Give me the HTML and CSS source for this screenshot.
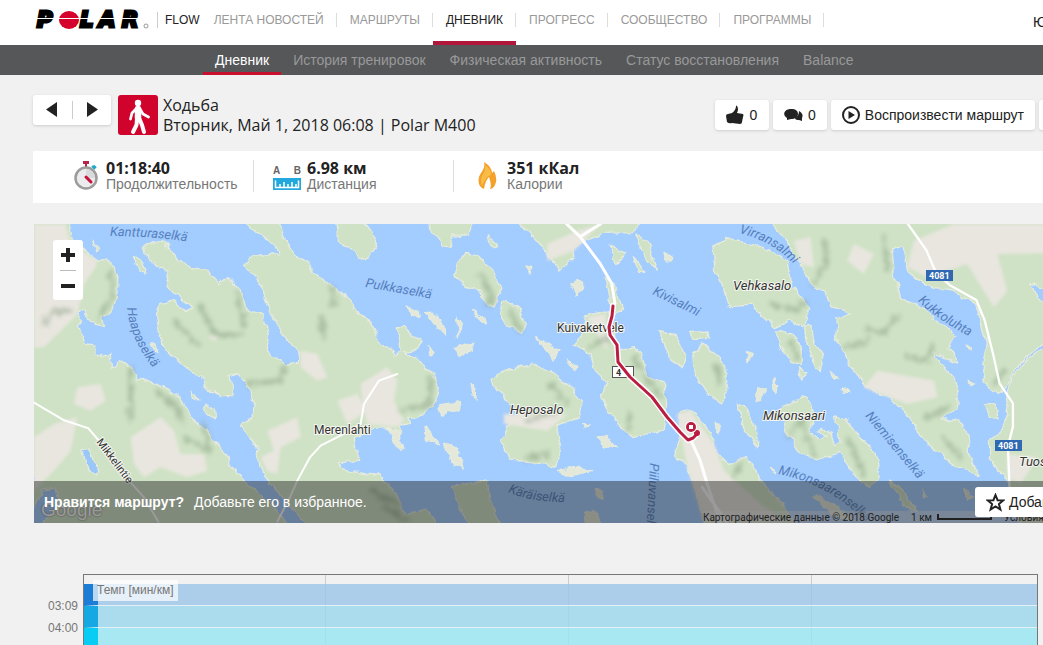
FILE: index.html
```html
<!DOCTYPE html>
<html lang="ru">
<head>
    <meta charset="UTF-8">
    <meta name="viewport" content="width=device-width, initial-scale=1.0">
    <title>Polar Flow - Дневник</title>
    <link rel="stylesheet" href="styles.css">
</head>
<body>
<div class="page">

    <header class="topbar">
        <a href="#" class="logo" aria-label="Polar">
            <svg width="116" height="24" viewBox="0 0 116 24">
                <g class="logo-text">
                    <text x="4" y="19">P</text>
                    <text x="47" y="19">L</text>
                    <text x="66" y="19">A</text>
                    <text x="89" y="19">R</text>
                </g>
                <ellipse cx="36" cy="12" rx="10" ry="9" fill="#d5002b"/>
                <path d="M0 10.500H112" stroke="#fff" stroke-width="1"/>
                <circle cx="113" cy="18" r="2" fill="none" stroke="#999"/>
            </svg>
        </a>
        <a href="#" class="flow">FLOW</a>
        <nav class="main-nav">
            <a href="#">ЛЕНТА НОВОСТЕЙ</a>
            <a href="#">МАРШРУТЫ</a>
            <a href="#" class="active">ДНЕВНИК</a>
            <a href="#">ПРОГРЕСС</a>
            <a href="#">СООБЩЕСТВО</a>
            <a href="#">ПРОГРАММЫ</a>
        </nav>
        <a href="#" class="user">Юрий</a>
    </header>

    <nav class="sub-nav">
        <a href="#" class="active">Дневник</a>
        <a href="#">История тренировок</a>
        <a href="#">Физическая активность</a>
        <a href="#">Статус восстановления</a>
        <a href="#">Balance</a>
    </nav>

    <main>
        <div class="session">
            <div class="pager">
                <button aria-label="Назад"><svg width="12" height="16" viewBox="0 0 12 16"><path d="M11 0V15L0 7.500Z" fill="#222"/></svg></button>
                <button aria-label="Вперёд"><svg width="12" height="16" viewBox="0 0 12 16"><path d="M1 0V15L12 7.500Z" fill="#222"/></svg></button>
            </div>
            <div class="sport">
                <svg width="40" height="40" viewBox="0 0 40 40">
                    <circle cx="20" cy="8" r="3.200" fill="#fff"/>
                    <g fill="none" stroke="#fff" stroke-linecap="round" stroke-linejoin="round">
                        <path d="M20 14V23" stroke-width="6.500"/>
                        <path d="M18 14L14 18L12.500 24M22 14L25 19L30.500 22" stroke-width="2.800"/>
                        <path d="M19 24L18.500 30L15 37M21.500 24L24 30L26 37" stroke-width="4"/>
                    </g>
                </svg>
            </div>
            <h1>Ходьба<br>Вторник, Май 1, 2018 06:08 | Polar M400</h1>
            <div class="actions">
                <button class="count">
                    <svg width="18" height="20" viewBox="0 0 18 20"><path d="M0 11Q0 9 2 9L6 8Q10 5 10 1Q10 0 11 1Q13 4 11 8L17 9Q18 10 17 12L16 17Q16 19 14 19L6 18Q3 19 1 17Z" fill="#222"/></svg>0
                </button>
                <button class="count">
                    <svg width="19" height="14" viewBox="0 0 19 14"><path d="M15 3Q20 6 18 10L18 13L15 12Q11 12 11 10Q15 8 15 3Z" fill="#222"/><path d="M7 1C12 1 14 3 14 6C14 9 11 11 7 11L3 12L3 10C-2 7 0 1 7 1Z" fill="#222"/></svg>0
                </button>
                <button>
                    <svg width="18" height="18" viewBox="0 0 18 18"><circle cx="9" cy="9" r="8" fill="none" stroke="#222" stroke-width="2"/><path d="M6.500 5V13L13 9Z" fill="#222"/></svg>Воспроизвести маршрут
                </button>
                <button class="export">Экспорт</button>
            </div>
        </div>

        <section class="stats">
            <div class="stat">
                <svg width="26" height="30" viewBox="0 0 26 30">
                    <path d="M9 0H15V3H9ZM11 3H13V6H11Z" fill="#b5254a"/>
                    <path d="M18 5L21 8M19.500 4.500L22 7" stroke="#22a7c4" stroke-width="2"/>
                    <circle cx="12" cy="17" r="10.500" fill="#ececee" stroke="#9c9c9c" stroke-width="2.500"/>
                    <path d="M12 17V8A9 9 0 0 1 21 17Z" fill="#d9dadb"/>
                    <path d="M12 16L17 21" stroke="#c5133c" stroke-width="3" stroke-linecap="round"/>
                </svg>
                <p><strong>01:18:40</strong><span>Продолжительность</span></p>
            </div>
            <div class="stat">
                <div class="ruler">
                    <b>A</b><b>B</b>
                    <svg width="28" height="12" viewBox="0 0 28 12"><rect width="28" height="12" fill="#23a8dd"/><path d="M2.500 2.500V9.500H25.500V2.500M7 9V6M11 9V4M15 9V6M19 9V4M23 9V6" fill="none" stroke="#fff" stroke-width="1.500"/></svg>
                </div>
                <p><strong>6.98 км</strong><span>Дистанция</span></p>
            </div>
            <div class="stat">
                <svg width="19" height="28" viewBox="0 0 19 28">
                    <path d="M6 0Q14 5 14 11L16 9Q20 17 17 23Q15 27 12 27Q14 23 11 15Q7 19 6 27Q-1 24 1 15Q2 12 5 8Q7 4 6 0Z" fill="#f4a12c"/>
                    <path d="M7 3Q13 7 13 13Q8 14 4 24Q2 19 4 14Q8 9 7 3Z" fill="#f9bd45"/>
                </svg>
                <p><strong>351 кКал</strong><span>Калории</span></p>
            </div>
        </section>

        <section class="map">
            <svg class="terrain" viewBox="0 0 1186 299" preserveAspectRatio="xMinYMin slice">
                <defs>
                    <filter id="coast" x="0" y="0" width="100%" height="100%">
                        <feTurbulence type="fractalNoise" baseFrequency="0.090" numOctaves="3" seed="4"/>
                        <feDisplacementMap in="SourceGraphic" scale="8" xChannelSelector="R" yChannelSelector="G"/>
                    </filter>
                    <filter id="soft" x="-20%" y="-20%" width="140%" height="140%"><feGaussianBlur stdDeviation="4"/></filter>
                    <filter id="shade" x="-20%" y="-20%" width="140%" height="140%">
                        <feTurbulence type="fractalNoise" baseFrequency="0.060" numOctaves="3" seed="9" result="noise"/>
                        <feDisplacementMap in="SourceGraphic" in2="noise" scale="36" xChannelSelector="R" yChannelSelector="G"/>
                        <feGaussianBlur stdDeviation="7"/>
                    </filter>
                    <path id="p-haapa" d="M93 84Q97 118 121 146"/>
                    <path id="p-kantt" d="M76 12Q115 12 158 18"/>
                    <path id="p-virra" d="M705 9Q742 18 765 46"/>
                    <path id="p-mikon" d="M744 250Q795 260 832 298"/>
                    <path id="p-karai" d="M474 268Q497 279 540 278"/>
                    <path id="p-kukko" d="M884 77Q905 98 945 117"/>
                </defs>
                <rect width="1186" height="299" fill="#a3ccff"/>

                <g filter="url(#coast)">
                <g transform="scale(.3333)" fill="#cfe2c5" stroke="#e6ebdc" stroke-width="4" stroke-linejoin="round">
                    <!-- west shore and the central peninsula -->
                    <g transform="translate(-12 -12)">
                        <path d="M-20 -20H115L130 55L165 95L200 120L245 125L260 180L262 230L245 275L215 290L220 320L195 312L160 275L145 275L150 320L165 370L190 375L205 410L240 400L245 445L270 425L300 440L325 485L350 475L400 500L440 520L470 565L500 610L540 645L580 690L600 735L640 780L690 820L740 870L780 930H-20Z"/>
                        <path d="M630 -10L690 45L735 75L745 105L670 105L640 135L680 170L700 220L720 270L745 320L780 370L808 400L805 430L770 435L730 410L712 390L715 340L700 290L650 260L630 215L610 180L590 170L565 195L540 160L515 150L480 140L445 125L430 100L405 70L370 65L340 80L345 100L370 130L410 150L415 200L450 230L485 265L470 275L430 245L395 250L380 280L385 320L395 370L420 405L470 435L480 460L515 470L520 500L570 530L610 530L600 470L620 458L640 480L665 510L675 560L665 590L630 615L660 650L685 690L680 710L690 730L705 770L740 810L790 870L850 930H1235L1190 870L1130 880L1100 830L1060 780L1050 765L930 745L925 735L985 720L990 695L975 690L970 650L1035 628L1080 625L1100 670L1115 690L1110 615L1140 610L1130 590L1180 585L1210 560L1225 510L1210 465L1160 420L1120 395L1150 390L1180 362L1145 350L1130 320L1102 320L1110 390L1090 405L1050 360L1020 310L990 290L950 230L890 190L850 150L800 110L760 50L740 -10Z"/>
                        <path d="M310 110L330 115L350 160L325 155ZM485 515L510 540L490 535ZM525 555L555 570L555 597L530 580ZM190 60L208 90L200 95ZM355 370L375 375L385 395Z"/>
                        <path d="M915 -10L925 60L960 95L1010 118L1040 80L1030 50L990 -10Z"/>
                        <path d="M150 685L175 690L205 740L200 765L180 755Z" fill="#9bc7f8"/>
                        <path d="M35 810L75 805L90 850L60 880L30 930H0V880ZM-10 750L25 775L10 790Z" fill="#a3ccff"/>
                    </g>
                    <!-- islands in the middle -->
                    <g transform="translate(1008 -12)">
                        <path d="M170 -10H315L300 45L250 45L240 85L220 80L190 40ZM355 45L385 70L380 82L355 65ZM265 130L290 100L325 105L365 145L385 190L395 220L375 258L350 250L325 210L290 200L255 170ZM395 245L440 255L470 310L455 340L410 315L392 285Z"/>
                        <path d="M425 -10L490 50L520 85L570 150L612 115L605 85L650 60L700 40L790 38L820 -10ZM795 45L830 60L862 150L830 120ZM720 75L750 90L770 100L740 130ZM790 110L825 155L805 150Z"/>
                        <path d="M365 480L400 455L480 432L560 465L600 500L640 545L630 590L560 615L575 700L560 740L480 725L420 720L395 660L430 590L450 590L400 530Z"/>
                        <path d="M650 285L710 275L730 330L740 400L790 380L815 405L830 470L880 490L890 550L880 630L840 640L790 650L730 600L710 560L695 530L710 490L670 440L660 405L610 370L640 340ZM700 170L735 200L755 270L735 290L715 220Z"/>
                        <path d="M930 580L965 570L1035 660L1039 700L1079 730L1129 710L1154 750L1199 810L1249 870L1280 930H1010L970 790L950 735L920 720L915 690L930 660Z"/>
                        <path d="M245 800L350 780L360 840L395 930H310L265 850ZM870 335L920 345L945 400L935 440L900 415ZM970 400L1000 370L1040 400L1064 440L1069 500L1059 550L1019 530L980 470ZM960 335L1010 330L1015 355L970 360Z"/>
                        <g fill="#e3e8d8">
                            <path d="M115 260L140 270L145 290L122 290ZM170 280L200 280L230 345L205 330ZM260 290L272 310L265 350ZM308 275L352 300L345 312ZM255 385L305 370L308 390L265 403ZM180 380L195 400L183 405ZM500 352L570 395L550 420ZM595 415L625 440L612 450ZM600 195L625 180L643 200L620 225ZM468 140L485 145L482 162ZM885 100L905 115L890 120Z"/>
                            <path d="M300 490L325 540L305 520ZM205 555L275 545L265 570L215 582ZM55 620L85 630L98 690L75 665ZM165 620L205 675L170 660ZM218 670L245 665L283 750L255 735ZM680 655L710 645L745 685L700 680ZM560 755L610 740L665 752L590 765ZM635 610L660 618L640 626ZM670 815L700 810L695 840ZM640 880L680 870L700 930H645Z"/>
                        </g>
                    </g>
                    <!-- east shore -->
                    <g transform="translate(2007 -12)">
                        <path d="M185 -10L240 50L270 90L290 130L330 200L370 215L380 255L445 280L400 300L395 360L430 400L445 440L490 500L560 530L610 580L640 620L660 660L710 700L760 740L825 765L800 700L795 640L770 600L715 600L760 560L770 500L740 460L690 400L770 430L735 380L755 350L700 300L640 255L595 235L575 170L568 90L600 80L620 160L680 200L750 210L820 255L835 310L850 370L840 440L850 500L890 520L920 480L950 430L1020 370L1600 340V-10Z"/>
                        <path d="M1600 365L1020 385L960 430L925 480L905 520L920 600L890 640L860 670L860 720L900 765L920 800L960 930H1600Z"/>
                        <path d="M30 80L70 55L130 65L200 90L250 120L270 200L315 260L300 320L260 300L215 320L170 280L150 255L80 260L60 200L35 140Z"/>
                        <path d="M225 570L300 530L325 560L330 600L322 640L350 660L372 650L345 635L350 620L385 640L395 680L415 670L395 590L430 600L480 660L520 700L530 780L500 805L460 770L410 700L350 720L290 700L260 650Z"/>
                        <path d="M215 330L250 330L295 380L295 430L265 425L235 380ZM305 320L330 320L335 365L360 410L352 455L335 430L310 370ZM290 440L312 465L295 480ZM100 550L130 560L165 640L160 680L125 630ZM845 550L880 560L885 600L860 590ZM560 780L600 810L640 880L600 850Z"/>
                        <path d="M165 500L190 510L180 540L160 545ZM210 475L228 495L215 520ZM130 395L150 400L135 425ZM385 455L410 475L395 480ZM420 500L438 520L425 520ZM790 375L808 385L795 395ZM795 475L818 495L805 500ZM330 825L400 860L450 900L380 880ZM660 810L675 825L665 828ZM785 805L810 830L795 838ZM40 610L55 620L45 640ZM200 740L220 765L205 755Z" fill="#e3e8d8"/>
                        <path d="M980 185L1040 215V260L1005 235Z" fill="#a3ccff"/>
                    </g>
                </g>
                </g>

                <g transform="scale(.3333)">
                    <!-- open fields -->
                    <g fill="#e8e6df" filter="url(#soft)">
                        <path d="M0 0H95L110 60L190 110L185 130L150 180L130 270L70 330L30 370H0ZM130 490L200 480L215 530L170 560L120 540ZM60 600L130 580L110 680L60 740L0 800V640ZM290 640L380 580L420 620L440 690L510 690L520 740L460 760L380 730L330 760L300 720ZM700 620L790 580L800 640L720 680ZM680 700L740 670L730 750L700 740ZM800 380L850 390L880 460L850 470L800 430ZM910 530L970 510L1000 560L940 600ZM530 330L550 335L545 350L525 345Z"/>
                        <path d="M980 480L1060 430L1090 470L1080 530L1110 590L1090 610L1000 600L990 560ZM1540 60L1630 20L1700 0L1620 80L1540 110ZM1410 570L1600 570L1540 620L1410 600ZM1660 280L1715 270L1720 380ZM1930 570L1970 560L2040 660L2070 740L2180 840L2250 890H2010L1960 730Z"/>
                        <path d="M2280 50L2330 40L2340 130L2300 120ZM2460 60L2520 90L2490 150L2440 110ZM2640 50L2760 0H3560V80L2890 90L2920 200L2880 250L2800 120L2680 160L2620 130ZM2530 440L2700 470L2710 520L2620 540L2490 490ZM2920 690L3010 700L2960 780L2920 760Z"/>
                    </g>
                    <!-- hill shading -->
                    <g fill="none" stroke="#7f967a" stroke-width="14" stroke-linecap="round" opacity=".45" filter="url(#shade)">
                        <path d="M232 140L236 215L195 280M290 430L290 590M365 500L430 550L445 590M510 600L525 680L450 640M500 250L540 330L620 330M640 480L740 470L750 430M890 190L905 240L890 240M860 280L870 340M30 300L60 260L110 260M610 210L630 300M420 290L490 360"/>
                        <path d="M1190 460L1190 540L1100 560M1340 150L1380 230L1360 240M1430 260L1460 320M1790 560L1780 620M1800 400L1830 450L1880 520M1670 370L1720 340M1480 590L1560 560M1550 480L1600 540M1480 700L1540 690M1050 850L1120 890M1010 800L1090 840"/>
                        <path d="M2210 240L2290 260L2310 230M2370 50L2380 110L2340 180M2550 30L2560 130M2500 310L2540 330L2590 280M2620 400L2680 410L2700 360M2440 370L2500 350M2260 640L2300 590L2340 690M2440 640L2490 750M2910 440L2880 480M2050 420L2055 480M2270 350L2290 400M2680 580L2740 550M2730 640L2780 700M2100 760L2120 720"/>
                    </g>
                    <g fill="none" stroke="#fff" stroke-linecap="round" stroke-linejoin="round">
                        <path d="M0 536L88 588L163 613L193 648L288 773L328 818L373 893M730 893L768 820L790 770L828 700L860 665L930 630L980 600L990 540L1035 470L1090 450" stroke-width="6"/>
                        <path d="M1598 0L1638 38L1698 118L1733 178L1743 238M1638 38L1700 0M1973 653L1998 708L2020 780L2060 900M2005 790L2080 897" stroke-width="9"/>
                        <path d="M2622 0L2677 78L2707 148L2747 183L2827 228L2852 288L2877 388L2897 478L2937 538L2937 608L2922 668L2927 790" stroke-width="7"/>
                    </g>
                </g>

                <g class="water-label">
                    <text><textPath href="#p-kantt">Kantturaselkä</textPath></text>
                    <text><textPath href="#p-haapa">Haapaselkä</textPath></text>
                    <text transform="translate(331 63) rotate(10)">Pulkkaselkä</text>
                    <text transform="translate(618 70) rotate(26)">Kivisalmi</text>
                    <text><textPath href="#p-virra">Virransalmi</textPath></text>
                    <text><textPath href="#p-kukko">Kukkoluhta</textPath></text>
                    <text transform="translate(831 192) rotate(50)">Niemisenselkä</text>
                    <text><textPath href="#p-mikon">Mikonsaarenselkä</textPath></text>
                    <text><textPath href="#p-karai">Käräiselkä</textPath></text>
                    <text transform="translate(616 239) rotate(93)">Piiluvanselkä</text>
                </g>
                <g class="place-label">
                    <text x="523" y="108">Kuivaketvele</text>
                    <text x="280" y="210">Merenlahti</text>
                    <text x="476" y="190" class="island">Heposalo</text>
                    <text x="699" y="66" class="island">Vehkasalo</text>
                    <text x="729" y="196" class="island">Mikonsaari</text>
                    <text x="985" y="242" class="island">Tuosa</text>
                    <text transform="translate(62 218) rotate(53)" class="road">Mikkelintie</text>
                </g>
                <g class="shield">
                    <rect x="578.500" y="142.500" width="21" height="11" fill="#fff" stroke="#555"/>
                    <text x="582" y="152" fill="#333">4</text>
                    <rect x="892" y="46" width="27" height="11" fill="#2f69b3"/>
                    <text x="895" y="55">4081</text>
                    <rect x="961" y="216" width="27" height="11" fill="#2f69b3"/>
                    <text x="964" y="225">4081</text>
                </g>
                <!-- walked route -->
                <g fill="none" stroke-linecap="round" stroke-linejoin="round">
                    <path d="M579 82L578 92L575 103L576 111L583 121L584 138L596 153L618 173L633 193L646 208L654 216L659 214L664 209" stroke="#fff" stroke-width="6"/>
                    <path d="M579 82L578 92L575 103L576 111L583 121L584 138L596 153L618 173L633 193L646 208L654 216L659 214L664 209" stroke="#ba1d41" stroke-width="3"/>
                </g>
                <circle cx="663" cy="209" r="3" fill="#ba1d41"/>
                <circle cx="657" cy="203" r="6" fill="#fff"/>
                <circle cx="657" cy="203" r="5" fill="#ba1d41"/>
                <rect x="655" y="201" width="4" height="4" fill="#fff"/>
            </svg>

            <div class="zoom">
                <button aria-label="Приблизить"><svg width="14" height="14" viewBox="0 0 14 14"><path d="M7 0V14M0 7H14" stroke="#222" stroke-width="4"/></svg></button>
                <button aria-label="Отдалить"><svg width="14" height="14" viewBox="0 0 14 14"><path d="M0 7H14" stroke="#222" stroke-width="4"/></svg></button>
            </div>

            <div class="credits">
                <span>Картографические данные © 2018 Google</span>
                <span class="scale">1 км <i></i></span>
                <a href="#">Условия</a>
            </div>
            <span class="google">Google</span>

            <div class="favorite">
                <p><strong>Нравится маршрут?</strong>Добавьте его в избранное.</p>
                <button>
                    <svg width="19" height="19" viewBox="0 0 19 19"><path d="M9.500 2L11.600 7.200L17.200 7.500L12.900 11L14.400 16.500L9.500 13.400L4.600 16.500L6.100 11L1.800 7.500L7.400 7.200Z" fill="none" stroke="#222" stroke-width="2"/></svg>Добавить в избранное
                </button>
            </div>
        </section>

        <section class="chart">
            <div class="axis"><span>03:09</span><span>04:00</span></div>
            <div class="plot">
                <span class="legend">Темп [мин/км]</span>
                <div class="zone zone-5"></div>
                <div class="zone zone-4"></div>
                <div class="zone zone-3"></div>
            </div>
        </section>
    </main>

</div>
</body>
</html>
```
FILE: styles.css
```css
* { box-sizing: border-box; }
body { margin: 0; overflow-x: hidden; background: #f1f1f1; color: #222; font: 14px/18px "Liberation Sans", Arial, sans-serif; }
a { color: inherit; text-decoration: none; }
p, h1 { margin: 0; }
button { display: flex; align-items: center; justify-content: center; padding: 0; border: none; background: #fff; color: #222; font: inherit; white-space: nowrap; cursor: pointer; }
svg { display: block; flex: none; }
.page { min-width: 1220px; overflow: hidden; }

/* header */
.topbar { display: flex; height: 45px; padding-left: 33px; background: #fff; font-size: 12px; line-height: 40px; }
.logo { padding-top: 8px; }
.logo-text { font: italic bold 21px "DejaVu Sans", sans-serif; stroke: #000; stroke-width: 3px; }
.flow { height: 16px; margin: 12px 1px 0 8px; padding-left: 7px; border-left: 1px solid #ccc; line-height: 17px; }
.main-nav { display: flex; color: #999; }
.main-nav a { position: relative; padding: 0 13px; }
.main-nav a::after { content: ""; position: absolute; top: 13px; right: 0; height: 14px; border-right: 1px solid #ddd; }
.main-nav .active { color: #222; border-bottom: 4px solid #b0173a; }
.user { width: 187px; margin-left: auto; font-size: 14px; line-height: 45px; }

.sub-nav { display: flex; height: 30px; padding-left: 203px; background: #555759; color: #999; line-height: 30px; }
.sub-nav a { padding: 0 12px; }
.sub-nav .active { color: #fff; border-bottom: 3px solid #c8102e; }

main { padding: 20px 0 0 33px; }

/* session title */
.session { display: flex; height: 56px; }
.pager { display: flex; width: 78px; height: 30px; padding: 6px 0; border-radius: 3px; background: #fff; box-shadow: 0 1px 3px #ccc; }
.pager button { flex: 1; }
.pager button + button { border-left: 1px solid #ccc; }
.sport { width: 40px; height: 40px; margin: 0 5px 0 7px; border-radius: 3px; background: #d0032c; }
h1 { font: 16px/20px "Open Sans", "Noto Sans", sans-serif; }
.actions { display: flex; gap: 4px; margin: 5px 20px 0 auto; }
.actions button { gap: 5px; height: 30px; padding: 0 11px; border-radius: 3px; box-shadow: 0 1px 3px #ccc; }
.actions .count { width: 54px; }
.actions .export { width: 161px; }

/* summary */
.stats { display: flex; height: 52px; padding: 9px 21px; background: #fff; }
.stat { display: flex; align-items: center; gap: 6px; width: 200px; height: 32px; padding-left: 20px; border-right: 1px solid #ddd; }
.stat:last-child { border: none; padding-left: 24px; gap: 10px; }
.stat:nth-child(2) { padding-left: 19px; }
.stat p { display: flex; flex-direction: column; line-height: 16px; color: #777; }
.stat strong { color: #222; font: bold 16px/16px "Open Sans", "Noto Sans", sans-serif; }
.ruler { display: grid; grid-template-columns: 1fr auto; width: 28px; color: #666; font-size: 10px; line-height: 15px; }
.ruler svg { grid-column: 1 / 3; }

/* map */
.map { position: relative; height: 299px; margin: 21px 0 0 1px; overflow: hidden; }
.terrain { width: 100%; height: 100%; font-family: Roboto, sans-serif; }
.water-label { font-size: 13px; font-style: italic; fill: #5580bd; }
.place-label { font-size: 12px; fill: #333; stroke: #f4f6f0; stroke-width: 2px; paint-order: stroke; }
.island { font-size: 13px; font-style: italic; }
.road { font-size: 11px; }
.shield { font-size: 9px; font-weight: bold; fill: #fff; }
.zoom { position: absolute; top: 16px; left: 19px; width: 30px; padding: 0 7px; border-radius: 3px; background: #fff; }
.zoom button { width: 16px; height: 30px; }
.zoom button + button { border-top: 1px solid #bbb; }
.credits { position: absolute; right: 0; bottom: 0; display: flex; gap: 12px; width: 517px; height: 12px; background: rgba(245, 245, 245, .4); font: 10px/13px Roboto, sans-serif; white-space: nowrap; }
.scale { display: flex; gap: 5px; }
.scale i { width: 55px; height: 6px; margin-top: 3px; border: 2px solid #222; border-top: none; }
.google { position: absolute; left: 7px; bottom: 2px; color: #fff; font-size: 19px; line-height: 22px; text-shadow: 0 0 2px #555; }
.favorite { position: absolute; left: 0; right: 0; bottom: 0; display: flex; justify-content: space-between; height: 42px; padding: 6px 60px 6px 10px; background: rgba(30, 30, 30, .45); color: #fff; line-height: 30px; }
.favorite strong { margin-right: 10px; }
.favorite button { justify-content: flex-start; gap: 4px; width: 185px; padding: 0 11px; border-radius: 3px; }

/* pace chart */
.chart { display: flex; margin: 51px 182px 0 0; color: #777; font-size: 12px; }
.axis { display: flex; flex-direction: column; width: 50px; padding: 21px 5px 0 0; line-height: 22px; text-align: right; }
.plot { position: relative; flex: 1; padding-top: 9px; border: 1px solid #777; border-bottom: none; background: repeating-linear-gradient(90deg, transparent 0 241px, #ccc 241px 242px, transparent 242px 243px); }
.legend { position: absolute; top: 5px; left: 9px; padding: 0 4px; background: rgba(255, 255, 255, .7); line-height: 21px; }
.zone { height: 22px; border-bottom: 1px solid #e3f1f6; border-left: 14px solid; }
.zone-5 { background: rgba(155, 198, 232, .8); border-left-color: #1b7dd6; }
.zone-4 { background: rgba(152, 215, 238, .8); border-left-color: #15a8e2; }
.zone-3 { height: 17px; border-bottom: none; background: rgba(150, 230, 243, .8); border-left-color: #07cdf5; }
```
